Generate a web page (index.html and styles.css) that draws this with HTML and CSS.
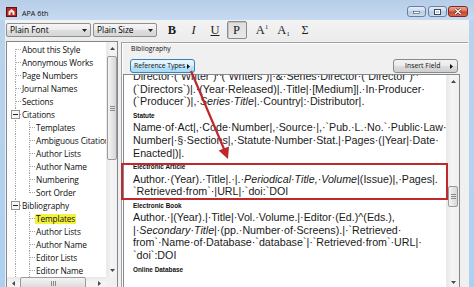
FILE: index.html
```html
<!DOCTYPE html>
<html lang="en">
<head>
<meta charset="utf-8">
<title>APA 6th</title>
<link rel="stylesheet" href="styles.css">
</head>
<body>
<div class="window">
  <header class="titlebar">
    <svg class="app-icon" width="11" height="10" viewBox="0 0 11 10"><rect x="0.5" y="0.5" width="10" height="9" fill="#b8281f" stroke="#5c1410"/><path d="M2.5 8V4.5L5.5 2l3 2.5V8z" fill="#f4e9e6"/><rect x="4.5" y="5.5" width="2" height="2.5" fill="#b8281f"/></svg>
    <span class="title">APA 6th</span>
    <div class="caption">
      <span class="cb cb-min"><svg width="7" height="3" viewBox="0 0 7 3"><rect x="0.5" y="0.5" width="6" height="2" fill="#fff" stroke="#3d4a5c" stroke-width="0.6"/></svg></span>
      <span class="cb cb-max"><svg width="7" height="6" viewBox="0 0 7 6"><rect x="0.5" y="0.5" width="6" height="5" fill="none" stroke="#3d4a5c" stroke-width="1"/><rect x="1.5" y="1.5" width="4" height="3" fill="none" stroke="#fff" stroke-width="1"/></svg></span>
      <span class="cb cb-close"><svg width="8" height="7" viewBox="0 0 8 7"><path d="M1 0.8L7 6.2M7 0.8L1 6.2" stroke="#5a1a12" stroke-width="2.4"/><path d="M1 0.8L7 6.2M7 0.8L1 6.2" stroke="#fff" stroke-width="1.3"/></svg></span>
    </div>
  </header>

  <div class="client">
    <div class="toolbar">
      <div class="combo combo-font"><span>Plain Font</span><svg width="5" height="3" viewBox="0 0 5 3"><path d="M0 0h5L2.5 3z" fill="#222"/></svg></div>
      <div class="combo combo-size"><span>Plain Size</span><svg width="5" height="3" viewBox="0 0 5 3"><path d="M0 0h5L2.5 3z" fill="#222"/></svg></div>
      <div class="fmt">
        <span class="fb fb-b">B</span>
        <span class="fb fb-i">I</span>
        <span class="fb fb-u">U</span>
        <span class="fb fb-p">P</span>
        <span class="fb fb-sup fb-gap">A<span class="sup">1</span></span>
        <span class="fb fb-sub">A<span class="sub">1</span></span>
        <span class="fb fb-sig">Σ</span>
      </div>
    </div>

    <div class="body">
      <aside class="sidebar">
        <div class="tree-wrap">
          <div class="tree">
            <div class="row"><span class="g g-f"></span><span class="tx">About this Style</span></div>
            <div class="row"><span class="g g-t"></span><span class="tx">Anonymous Works</span></div>
            <div class="row"><span class="g g-t"></span><span class="tx">Page Numbers</span></div>
            <div class="row"><span class="g g-t"></span><span class="tx">Journal Names</span></div>
            <div class="row"><span class="g g-t"></span><span class="tx">Sections</span></div>
            <div class="row"><span class="g g-e"><svg width="9" height="9" viewBox="0 0 9 9"><rect x="0.5" y="0.5" width="8" height="8" fill="#f7f7f7" stroke="#939393"/><path d="M2 4.5h5" stroke="#222"/></svg></span><span class="tx">Citations</span></div>
            <div class="row"><span class="g g-v"></span><span class="g g-t"></span><span class="tx">Templates</span></div>
            <div class="row"><span class="g g-v"></span><span class="g g-t"></span><span class="tx">Ambiguous Citations</span></div>
            <div class="row"><span class="g g-v"></span><span class="g g-t"></span><span class="tx">Author Lists</span></div>
            <div class="row"><span class="g g-v"></span><span class="g g-t"></span><span class="tx">Author Name</span></div>
            <div class="row"><span class="g g-v"></span><span class="g g-t"></span><span class="tx">Numbering</span></div>
            <div class="row"><span class="g g-v"></span><span class="g g-l"></span><span class="tx">Sort Order</span></div>
            <div class="row"><span class="g g-e"><svg width="9" height="9" viewBox="0 0 9 9"><rect x="0.5" y="0.5" width="8" height="8" fill="#f7f7f7" stroke="#939393"/><path d="M2 4.5h5" stroke="#222"/></svg></span><span class="tx">Bibliography</span></div>
            <div class="row"><span class="g g-v"></span><span class="g g-t"></span><span class="tx hl">Templates</span></div>
            <div class="row"><span class="g g-v"></span><span class="g g-t"></span><span class="tx">Author Lists</span></div>
            <div class="row"><span class="g g-v"></span><span class="g g-t"></span><span class="tx">Author Name</span></div>
            <div class="row"><span class="g g-v"></span><span class="g g-t"></span><span class="tx">Editor Lists</span></div>
            <div class="row"><span class="g g-v"></span><span class="g g-t"></span><span class="tx">Editor Name</span></div>
          </div>
          <div class="vscroll vscroll-side">
            <span class="sb-btn"><svg width="5" height="3" viewBox="0 0 5 3"><path d="M0 3h5L2.5 0z" fill="#4a4a4a"/></svg></span>
            <span class="thumb thumb-side"><span class="grip-v"></span></span>
            <span class="sb-fill"></span>
            <span class="sb-btn"><svg width="5" height="3" viewBox="0 0 5 3"><path d="M0 0h5L2.5 3z" fill="#4a4a4a"/></svg></span>
          </div>
        </div>
        <div class="hscroll">
          <span class="sb-btn-h"><svg width="3" height="5" viewBox="0 0 3 5"><path d="M3 0v5L0 2.5z" fill="#4a4a4a"/></svg></span>
          <span class="thumb thumb-h"><span class="grip-h"></span></span>
          <span class="sb-fill"></span>
          <span class="sb-btn-h"><svg width="3" height="5" viewBox="0 0 3 5"><path d="M0 0v5L3 2.5z" fill="#4a4a4a"/></svg></span>
          <span class="corner"></span>
        </div>
      </aside>

      <section class="main">
        <div class="main-label">Bibliography</div>
        <div class="main-bar">
          <span class="btn btn-ref">Reference Types<svg width="3" height="5" viewBox="0 0 3 5"><path d="M0 0v5L3 2.5z" fill="#111"/></svg></span>
          <span class="btn btn-ins"><span>Insert Field</span><svg width="3" height="5" viewBox="0 0 3 5"><path d="M0 0v5L3 2.5z" fill="#111"/></svg></span>
        </div>
        <div class="editor">
          <div class="ed-text">
            <div class="ed-scroll">
              <div class="ln">Director·(`Writer`)^(`Writers`)|·&amp;·Series·Director·(`Director`)^</div>
              <div class="ln">(`Directors`)|.·(Year·Released)|.·Title|·[Medium]|.·In·Producer·</div>
              <div class="ln">(`Producer`)|,·<i>Series·Title</i>|.·Country|:·Distributor|.</div>
              <div class="lbl">Statute</div>
              <div class="ln">Name·of·Act|,·Code·Number|,·Source·|,·`Pub.·L.·No.`·Public·Law·</div>
              <div class="ln">Number|·§·Sections|,·Statute·Number·Stat.|·Pages·(|Year|·Date·</div>
              <div class="ln">Enacted|)|.</div>
              <div class="lbl">Electronic Article</div>
              <div class="ln">Author.·(Year).·Title|.·|.·<i>Periodical·Title,·Volume</i>|(Issue)|,·Pages|.</div>
              <div class="ln">`Retrieved·from`·|URL|·`doi:`DOI</div>
              <div class="lbl">Electronic Book</div>
              <div class="ln">Author.·|(Year).|·Title|·Vol.·Volume.|·Editor·(Ed.)^(Eds.),</div>
              <div class="ln">|·<i>Secondary·Title</i>|·(pp.·Number·of·Screens).|·`Retrieved·</div>
              <div class="ln">from`·Name·of·Database·`database`|·`Retrieved·from`·URL|·</div>
              <div class="ln">`doi`:DOI</div>
              <div class="lbl">Online Database</div>
            </div>
          </div>
          <div class="vscroll vscroll-ed">
            <span class="sb-btn"><svg width="5" height="3" viewBox="0 0 5 3"><path d="M0 3h5L2.5 0z" fill="#4a4a4a"/></svg></span>
            <span class="sb-fill sb-fill-top"></span>
            <span class="thumb thumb-ed"><span class="grip-v"></span></span>
            <span class="sb-fill"></span>
            <span class="sb-btn"><svg width="5" height="3" viewBox="0 0 5 3"><path d="M0 0h5L2.5 3z" fill="#4a4a4a"/></svg></span>
          </div>
        </div>
      </section>
    </div>
  </div>

  <div class="red-box"></div>
  <svg class="arrow" width="474" height="287" viewBox="0 0 474 287">
    <line x1="191" y1="71" x2="224" y2="149" stroke="#c0272d" stroke-width="2.2"/>
    <path d="M228 159L218.6 150.6L229 146.4z" fill="#c0272d"/>
  </svg>
</div>
</body>
</html>
```

FILE: styles.css
```css
* { box-sizing: border-box; margin: 0; padding: 0; }
html, body { width: 474px; height: 287px; overflow: hidden; }
body { font-family: "Open Sans", "Noto Sans", sans-serif; color: #000; background: #b0d1ee; }

.window {
  position: relative;
  width: 474px;
  height: 287px;
  display: flex;
  flex-direction: column;
  background: linear-gradient(#bcd3ec, #acd1f0);
}

/* title bar */
.titlebar {
  height: 20px;
  flex: none;
  display: flex;
  align-items: flex-start;
  padding: 0 6px;
  background: linear-gradient(#b6cde8, #c6daf0);
}
.app-icon { margin-top: 7px; flex: none; }
.title { font-size: 7.2px; line-height: 8px; margin: 9px 0 0 5px; color: #111; }
.caption { margin-left: auto; margin-top: 6px; display: flex; gap: 1px; }
.cb {
  height: 11px;
  width: 19px;
  border: 1px solid #6a809f;
  border-radius: 3px;
  display: flex;
  align-items: center;
  justify-content: center;
  background: linear-gradient(#e4ecf7, #cbdaee 48%, #b6cae4 52%, #cfdef0);
}
.cb-min { align-items: flex-end; padding-bottom: 2px; }
.cb-max { margin-left: 1px; }
.cb-close {
  width: 20px;
  border-color: #7d2a20;
  background: linear-gradient(#eba495, #d9735f 48%, #c7402a 52%, #d96a52);
}

/* client area */
.client {
  flex: 1;
  margin: 0 5px 4px;
  background: #f0f0f0;
  display: flex;
  flex-direction: column;
}

.toolbar {
  height: 21px;
  flex: none;
  display: flex;
  align-items: flex-start;
  padding: 3px 0 0 1px;
  background: linear-gradient(#f3f3f3, #ececec);
}
.combo {
  height: 14px;
  border: 1px solid #8e8f8f;
  border-radius: 2px;
  background: linear-gradient(#f6f6f6, #ebebeb 50%, #dedede 51%, #d6d6d6);
  display: flex;
  align-items: center;
  justify-content: space-between;
  padding: 0 3px 0 3px;
  font-size: 8.4px;
  line-height: 12px;
}
.combo-font { width: 85px; }
.combo-size { width: 64px; margin-left: 2px; }
.fmt { display: flex; gap: 1.5px; margin: -2px 0 0 5px; }
.fb {
  width: 20px;
  height: 18px;
  display: flex;
  align-items: center;
  justify-content: center;
  font-family: "Liberation Serif", "Times New Roman", serif;
  font-size: 12.5px;
  color: #1d1d1d;
  border: 1px solid transparent;
  border-radius: 2px;
}
.fb-b { font-weight: bold; }
.fb-i { font-style: italic; }
.fb-u { text-decoration: underline; text-underline-offset: 1px; }
.fb-p {
  border-color: #8b8b8b;
  background: linear-gradient(#dedede, #e8e8e8);
  box-shadow: inset 1px 1px 0 #c4c4c4;
}
.fb-gap { margin-left: 4px; }
.sup, .sub { font-size: 6.5px; position: relative; }
.sup { top: -4px; }
.sub { top: 3px; }
.fb-sig { font-size: 12px; }

/* body */
.body { flex: 1; display: flex; min-height: 0; }

.sidebar {
  width: 112px;
  flex: none;
  margin: 0 0 1px 1px;
  border: 1px solid #828790;
  background: #fff;
  display: flex;
  flex-direction: column;
}
.tree-wrap { flex: 1; display: flex; min-height: 0; }
.tree {
  flex: 1;
  overflow: hidden;
  padding-top: 1px;
  font-size: 8.3px;
  letter-spacing: -0.12px;
}
.row { display: flex; align-items: center; height: 13px; white-space: nowrap; }
.g { flex: none; width: 14px; height: 13px; }
.g-v { background: repeating-linear-gradient(#a3a3a3 0 1px, transparent 1px 2px) 8px 0 / 1px 100% no-repeat; }
.g-t {
  background:
    repeating-linear-gradient(90deg, #a3a3a3 0 1px, transparent 1px 2px) 9px 6px / 5px 1px no-repeat,
    repeating-linear-gradient(#a3a3a3 0 1px, transparent 1px 2px) 8px 0 / 1px 100% no-repeat;
}
.g-l {
  background:
    repeating-linear-gradient(90deg, #a3a3a3 0 1px, transparent 1px 2px) 9px 6px / 5px 1px no-repeat,
    repeating-linear-gradient(#a3a3a3 0 1px, transparent 1px 2px) 8px 0 / 1px 7px no-repeat;
}
.g-f {
  background:
    repeating-linear-gradient(90deg, #a3a3a3 0 1px, transparent 1px 2px) 9px 6px / 5px 1px no-repeat,
    repeating-linear-gradient(#a3a3a3 0 1px, transparent 1px 2px) 8px 6px / 1px 7px no-repeat;
}
.g-e {
  display: flex;
  align-items: center;
  padding-left: 4px;
  background:
    repeating-linear-gradient(90deg, #a3a3a3 0 1px, transparent 1px 2px) 9px 6px / 5px 1px no-repeat,
    repeating-linear-gradient(#a3a3a3 0 1px, transparent 1px 2px) 8px 0 / 1px 100% no-repeat;
}
.g-e svg { display: block; }
.tx { padding: 0 1px; line-height: 10px; color: #0c0c0c; }
.hl { background: #f3f33f; }

/* scrollbars */
.vscroll {
  flex: none;
  display: flex;
  flex-direction: column;
  background: linear-gradient(90deg, #e8e8e8, #f5f5f5 40%, #f0f0f0);
  border-left: 1px solid #ececec;
}
.vscroll-side { width: 11px; }
.sb-btn { height: 13px; flex: none; display: flex; align-items: center; justify-content: center; }
.sb-fill { flex: 1; }
.thumb {
  flex: none;
  border: 1px solid #9a9a9a;
  border-radius: 2px;
  display: flex;
  align-items: center;
  justify-content: center;
}
.thumb-side {
  height: 104px;
  margin: 1px 0 0 0;
  background: linear-gradient(90deg, #f4f4f4, #e6e6e6 50%, #d6d6d6);
}
.grip-v {
  width: 5px;
  height: 5px;
  background: repeating-linear-gradient(#8a8a8a 0 1px, transparent 1px 2px);
}
.hscroll {
  height: 13px;
  flex: none;
  display: flex;
  background: linear-gradient(#e8e8e8, #f5f5f5 40%, #f0f0f0);
}
.sb-btn-h { width: 13px; flex: none; display: flex; align-items: center; justify-content: center; }
.thumb-h {
  width: 66px;
  background: linear-gradient(#f4f4f4, #e6e6e6 50%, #d6d6d6);
}
.grip-h {
  width: 5px;
  height: 5px;
  background: repeating-linear-gradient(90deg, #8a8a8a 0 1px, transparent 1px 2px);
}
.corner { width: 11px; flex: none; background: #f0f0f0; }

/* main panel */
.main {
  flex: 1;
  margin: 1px 1px 0 3px;
  border-top: 1px solid #a0a0a0;
  border-left: 1px solid #a0a0a0;
  box-shadow: inset 1px 1px 0 #fff;
  display: flex;
  flex-direction: column;
  min-width: 0;
}
.main-label {
  height: 12px;
  line-height: 12px;
  font-size: 6.8px;
  margin-left: 9px;
  color: #111;
}
.main-bar {
  margin-top: 4px;
  height: 14px;
  display: flex;
  justify-content: space-between;
  padding: 0 10px 0 8px;
}
.btn {
  height: 14px;
  border-radius: 3px;
  display: flex;
  align-items: center;
  font-size: 6.9px;
  line-height: 10px;
  color: #111;
}
.btn-ref {
  width: 65px;
  gap: 2px;
  padding: 0 2px 0 3px;
  border: 1px solid #3c7fb1;
  background: linear-gradient(#eaf6fd, #d9f0fc 50%, #bee6fd 51%, #a7d9f5);
  letter-spacing: -0.1px;
}
.btn-ins {
  width: 65px;
  justify-content: space-between;
  padding: 0 4px 0 11px;
  border: 1px solid #8a8a8a;
  background: linear-gradient(#f2f2f2, #ebebeb 50%, #dddddd 51%, #cfcfcf);
}

.editor {
  flex: 1;
  margin: 1px 8px 2px 1px;
  border: 1px solid #828790;
  background: #fff;
  display: flex;
  min-height: 0;
}
.ed-text {
  flex: 1;
  overflow: hidden;
  padding-left: 9px;
  font-family: "Liberation Sans", Arial, sans-serif;
  font-size: 10.7px;
  color: #1a1a1a;
}
.ed-scroll { margin-top: -5px; }
.ln { height: 12.7px; line-height: 12.7px; white-space: nowrap; }
.lbl {
  height: 13.2px;
  padding-top: 4px;
  line-height: 8.6px;
  font-size: 6.4px;
  font-weight: bold;
  white-space: nowrap;
  color: #111;
}
.vscroll-ed { width: 13px; }
.sb-fill-top { flex: none; height: 98px; }
.thumb-ed {
  height: 21px;
  margin: 0 1px;
  background: linear-gradient(90deg, #f4f4f4, #e6e6e6 50%, #d6d6d6);
}

/* annotations */
.red-box {
  position: absolute;
  left: 121px;
  top: 163px;
  width: 327px;
  height: 37px;
  border: 2px solid #bd2a2e;
}
.arrow { position: absolute; left: 0; top: 0; pointer-events: none; }
```
